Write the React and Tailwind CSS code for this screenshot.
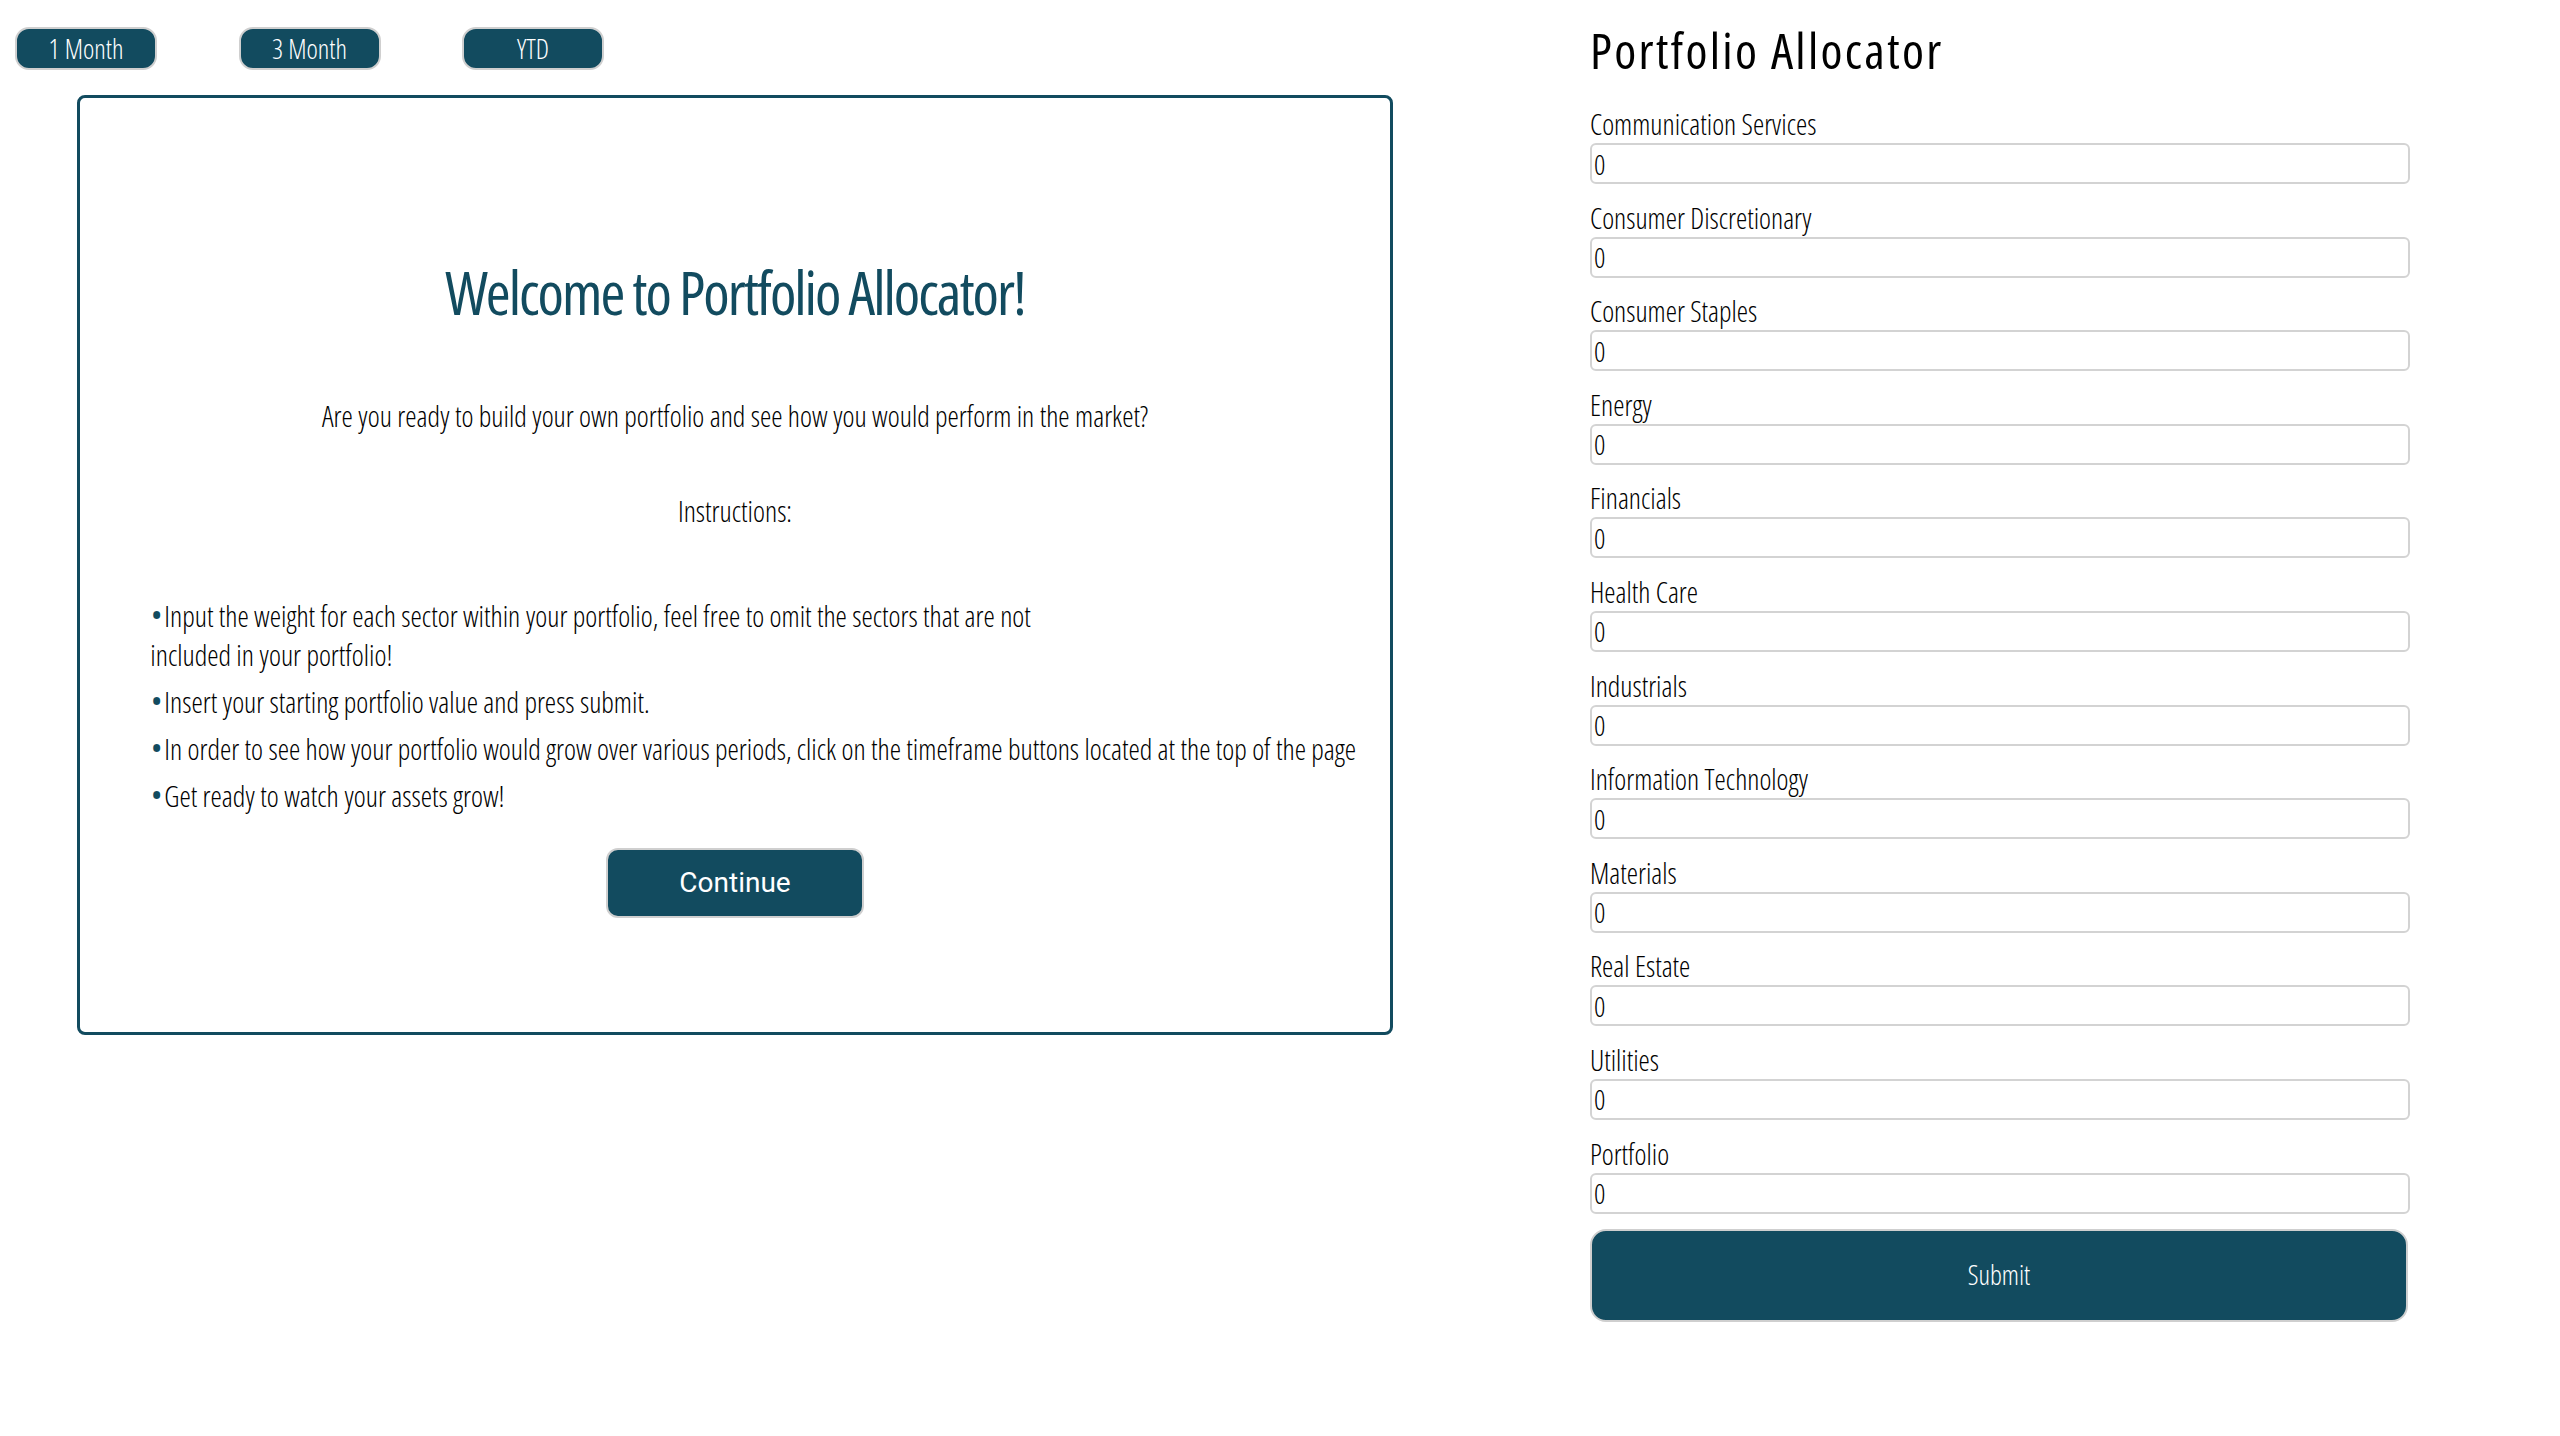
import React from "react";

const sectors = [
  "Communication Services",
  "Consumer Discretionary",
  "Consumer Staples",
  "Energy",
  "Financials",
  "Health Care",
  "Industrials",
  "Information Technology",
  "Materials",
  "Real Estate",
  "Utilities",
  "Portfolio",
];

function TopButton({ children }) {
  return (
    <button className="w-[142px] h-[43px] rounded-[14px] border-2 border-[#cfcfcf] bg-[#124b5f] text-white text-[27px] font-light leading-none [font-stretch:75%]">
      {children}
    </button>
  );
}

function Bullet({ children }) {
  return (
    <div className="flex items-start">
      <span className="text-[#124b5f] text-[24px] leading-[37px] font-bold mr-[3px]">•</span>
      <span>{children}</span>
    </div>
  );
}

export default function App() {
  return (
    <div className="flex items-start bg-white min-h-[1436px] font-['Open_Sans',sans-serif] text-black">
      <div className="w-[1575px] shrink-0 pl-[15px] pt-[27px]">
        <div className="flex gap-[81.5px]">
          <TopButton>1 Month</TopButton>
          <TopButton>3 Month</TopButton>
          <TopButton>YTD</TopButton>
        </div>
        <div className="ml-[62px] mt-[25px] w-[1316px] h-[940px] rounded-[8px] border-[3px] border-[#124b5f] flex flex-col items-center pt-[157px] [font-stretch:75%] font-light">
          <h1 className="text-[#124b5f] text-[60px] font-normal leading-[74px] tracking-[-2px]">
            Welcome to Portfolio Allocator!
          </h1>
          <p className="mt-[68px] text-[28.6px] leading-[38px]">
            Are you ready to build your own portfolio and see how you would perform in the market?
          </p>
          <p className="mt-[57px] text-[28.6px] leading-[38px]">Instructions:</p>
          <div className="self-stretch pl-[72px] mt-[66px] text-[28.6px] leading-[39px] flex flex-col gap-[8px]">
            <Bullet>
              Input the weight for each sector within your portfolio, feel free to omit the sectors that are not
              <br />
              <span className="-ml-[14px]">included in your portfolio!</span>
            </Bullet>
            <Bullet>Insert your starting portfolio value and press submit.</Bullet>
            <Bullet>
              In order to see how your portfolio would grow over various periods, click on the timeframe buttons located at the top of the page
            </Bullet>
            <Bullet>Get ready to watch your assets grow!</Bullet>
          </div>
          <button className="mt-[33px] w-[258px] h-[70px] rounded-[12px] border-2 border-[#cfcfcf] bg-[#124b5f] text-white text-[28px] font-normal font-['Roboto',sans-serif] [font-stretch:100%]">
            Continue
          </button>
        </div>
      </div>
      <div className="w-[822px] shrink-0 ml-[15px] pt-[20px] [font-stretch:75%] font-light">
        <h2 className="text-[50px] leading-[60px] tracking-[2.3px] font-normal">Portfolio Allocator</h2>
        <div className="mt-[28px] flex flex-col gap-[17.6px]">
          {sectors.map((s) => (
            <div key={s} className="flex flex-col">
              <label className="text-[28.5px] leading-[32px]">{s}</label>
              <input
                readOnly
                value="0"
                className="mt-[3px] h-[41px] w-[820px] rounded-[6px] border-2 border-[#d3d3d3] px-[2px] text-[28px] font-light outline-none [font-stretch:75%]"
              />
            </div>
          ))}
        </div>
        <button className="mt-[15px] w-[818px] h-[93px] rounded-[16px] border-2 border-[#cfcfcf] bg-[#124b5f] text-white text-[27px] font-light">
          Submit
        </button>
      </div>
    </div>
  );
}
